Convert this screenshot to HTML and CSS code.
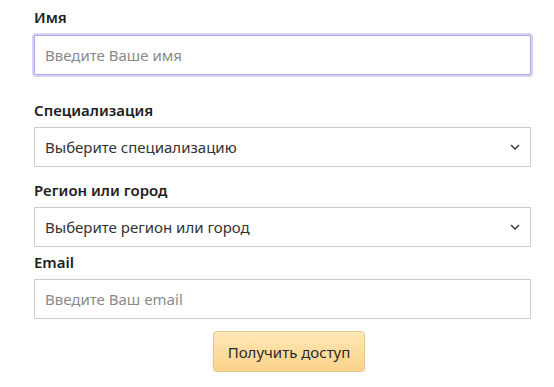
FILE: index.html
```html
<!DOCTYPE html>
<html lang="ru">

<head>
    <meta charset="UTF-8">
    <meta name="viewport" content="width=device-width, initial-scale=1.0">
    <title>Получить доступ</title>
    <link rel="stylesheet" href="styles.css">
</head>

<body>
    <form class="access-form">
        <div class="field field-name">
            <label for="name">Имя</label>
            <input type="text" id="name" class="control control-focus" placeholder="Введите Ваше имя">
        </div>

        <div class="field field-spec">
            <label for="spec">Специализация</label>
            <div class="select-wrap">
                <select id="spec" class="control">
                    <option>Выберите специализацию</option>
                </select>
                <svg class="chevron" viewBox="0 0 10 6" width="10" height="6">
                    <path d="M1 1l4 4 4-4" fill="none" stroke="#444" stroke-width="1.6" />
                </svg>
            </div>
        </div>

        <div class="field field-region">
            <label for="region">Регион или город</label>
            <div class="select-wrap">
                <select id="region" class="control">
                    <option>Выберите регион или город</option>
                </select>
                <svg class="chevron" viewBox="0 0 10 6" width="10" height="6">
                    <path d="M1 1l4 4 4-4" fill="none" stroke="#444" stroke-width="1.6" />
                </svg>
            </div>
        </div>

        <div class="field field-email">
            <label for="email">Email</label>
            <input type="email" id="email" class="control" placeholder="Введите Ваш email">
        </div>

        <div class="actions">
            <button type="button" class="btn-access">Получить доступ</button>
        </div>
    </form>
</body>

</html>
```

FILE: styles.css
```css
* {
    font-family: "Noto Sans", "Open Sans", Arial, sans-serif;
    box-sizing: border-box;
}

body {
    margin: 0;
    background-color: #FFFFFF;
}

.access-form {
    width: 531px;
    padding: 7px 0 0 34px;
}

.field>label {
    display: block;
    font-size: 15px;
    line-height: 20px;
    font-weight: 600;
    color: #1E1E1E;
    margin-bottom: 7px;
}

.field-name>label {
    margin-bottom: 8px;
}

.field-spec {
    margin-top: 25px;
}

.field-region {
    margin-top: 13px;
}

.field-email {
    margin-top: 5px;
}

.control {
    display: block;
    width: 100%;
    height: 40px;
    padding: 0 10px;
    border: 1px solid #CCCCCC;
    border-radius: 0;
    background-color: #FFFFFF;
    font-size: 15px;
    color: #333333;
    outline: none;
}

.control::placeholder {
    color: #8A8A8A;
}

.control-focus {
    border-color: #B3A7E2;
    border-radius: 2px;
    box-shadow: 0 0 0 2px #D9D2F4;
}

.select-wrap {
    position: relative;
}

.select-wrap>select {
    appearance: none;
    -webkit-appearance: none;
}

.chevron {
    position: absolute;
    right: 11px;
    top: 17px;
}

.actions {
    display: flex;
    justify-content: center;
    padding-left: 13px;
    margin-top: 12px;
}

.btn-access {
    width: 152px;
    height: 41px;
    border: 1px solid #E6C78E;
    border-radius: 4px;
    background: linear-gradient(#FEE8B6, #FBD28A);
    box-shadow: 0 1px 2px rgba(0, 0, 0, 0.12);
    font-size: 15px;
    color: #2A2A2A;
    cursor: pointer;
}
```
